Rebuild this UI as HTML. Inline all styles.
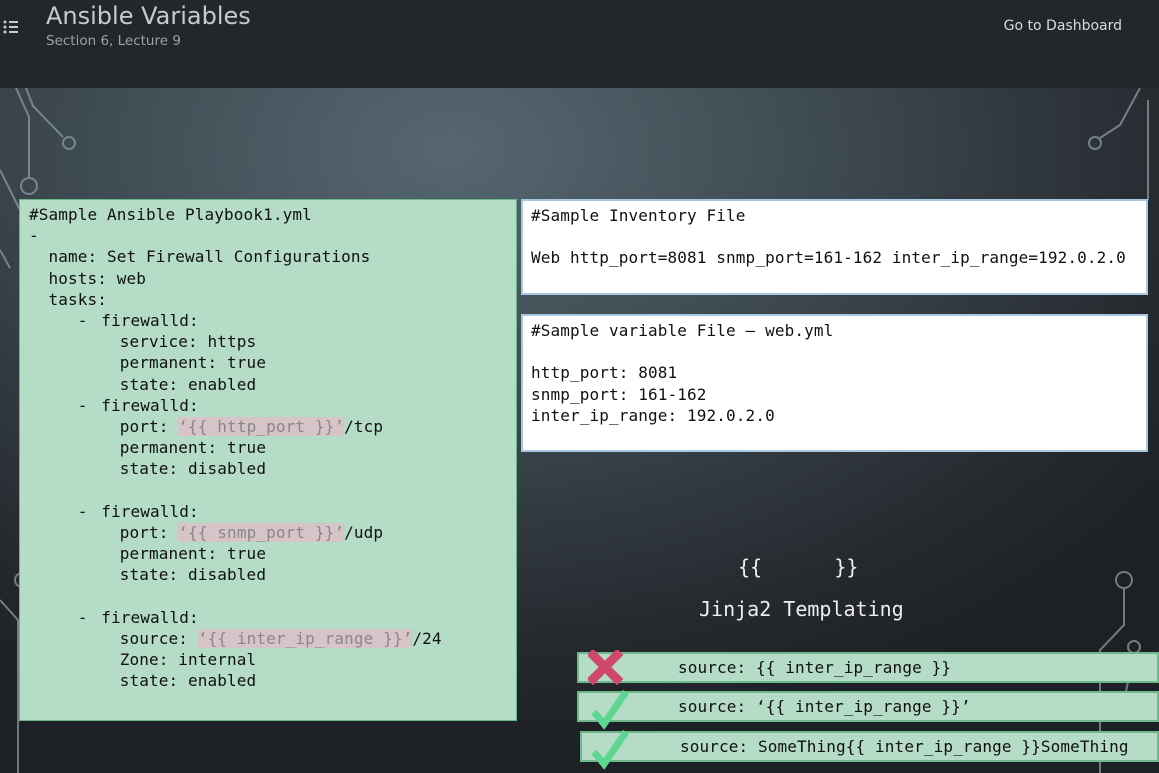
<!DOCTYPE html>
<html><head><meta charset="utf-8"><style>
body{margin:0;width:1159px;height:773px;overflow:hidden;font-family:"Liberation Sans",sans-serif;position:relative;
background:radial-gradient(ellipse 900px 600px at 450px 150px,#566770 0%,#3f4b53 40%,#262b30 80%,#1d2125 100%);}
.hdr{position:absolute;left:0;top:0;width:1159px;height:88px;background:#23262b;}
.t1{position:absolute;left:46px;top:2px;font-size:24px;color:#c8cbce;font-family:"DejaVu Sans",sans-serif;}
.t2{position:absolute;left:46px;top:33px;font-size:13.5px;color:#9ea2a6;font-family:"DejaVu Sans",sans-serif;}
.gd{position:absolute;right:37px;top:18px;font-size:14px;color:#d8dadc;font-family:"DejaVu Sans",sans-serif;}
pre{margin:0;font-family:"DejaVu Sans Mono","Liberation Mono",monospace;font-size:16px;letter-spacing:0.12px;line-height:21.2px;color:#111;}
.box{position:absolute;box-sizing:border-box;}
.l{left:19px;top:199px;width:498px;height:522px;background:#b4dcc6;border:1.5px solid #6bb689;padding:4px 0 0 9px;}
.w{background:#fff;border:2px solid #a9c7df;padding:4px 0 0 8px;}
.h{background:#d7c4c8;color:#888;}
.g{margin-left:4px}.k{margin-left:3px}
.s{position:absolute;box-sizing:border-box;background:#b4dcc6;border:2px solid #6fb88c;height:31px;}
.s pre{position:absolute;left:99px;top:3px;}
.c{position:absolute;color:#eee;font-family:"DejaVu Sans Mono",monospace;font-size:20px;}
</style></head><body>
<svg style="position:absolute;left:0;top:0" width="1159" height="773" fill="none" stroke="#8d9aa2" stroke-width="2" opacity=".75">
<path d="M16 88 L29 117 L29 178"/><circle cx="29" cy="186" r="8"/>
<path d="M26 88 L33 106 L63 137"/><circle cx="69" cy="143" r="6"/>
<path d="M0 170 L20 210"/><path d="M0 250 L10 268"/>
<path d="M1140 88 L1120 125 L1100 138"/><circle cx="1095" cy="143" r="6"/>
<path d="M1148 100 L1148 200"/>
<path d="M1124 588 L1124 625 L1100 650 L1100 773"/><circle cx="1124" cy="580" r="8"/>
<circle cx="1134" cy="647" r="6"/><path d="M1134 653 L1120 720"/>
<path d="M0 600 L18 620 L18 773"/><circle cx="22" cy="580" r="7"/>
<path d="M20 690 L45 700"/><circle cx="42" cy="686" r="6"/>
</svg>
<div class="hdr">
<svg style="position:absolute;left:3px;top:20px" width="16" height="14"><g fill="#c8cbce"><circle cx="2" cy="2" r="1.5"/><circle cx="2" cy="7" r="1.5"/><circle cx="2" cy="12" r="1.5"/><rect x="6" y="1" width="9" height="2"/><rect x="6" y="6" width="9" height="2"/><rect x="6" y="11" width="9" height="2"/></g></svg>
<div class="t1">Ansible Variables</div><div class="t2">Section 6, Lecture 9</div>
<div class="gd">Go to Dashboard</div></div>

<div class="box l"><pre>#Sample Ansible Playbook1.yml
-
  name: Set Firewall Configurations
  hosts: web
  tasks:
     -<span class="g"></span> firewalld:
<span class="k"></span>         service: https
<span class="k"></span>         permanent: true
<span class="k"></span>         state: enabled
     -<span class="g"></span> firewalld:
<span class="k"></span>         port: <span class="h">‘{{ http_port }}’</span>/tcp
<span class="k"></span>         permanent: true
<span class="k"></span>         state: disabled

     -<span class="g"></span> firewalld:
<span class="k"></span>         port: <span class="h">‘{{ snmp_port }}’</span>/udp
<span class="k"></span>         permanent: true
<span class="k"></span>         state: disabled

     -<span class="g"></span> firewalld:
<span class="k"></span>         source: <span class="h">‘{{ inter_ip_range }}’</span>/24
<span class="k"></span>         Zone: internal
<span class="k"></span>         state: enabled</pre></div>

<div class="box w" style="left:521px;top:199px;width:627px;height:96px"><pre>#Sample Inventory File

Web http_port=8081 snmp_port=161-162 inter_ip_range=192.0.2.0</pre></div>
<div class="box w" style="left:521px;top:314px;width:627px;height:138px"><pre>#Sample variable File – web.yml

http_port: 8081
snmp_port: 161-162
inter_ip_range: 192.0.2.0</pre></div>

<div class="c" style="left:738px;top:555px">{{&nbsp;&nbsp;&nbsp;&nbsp;&nbsp;&nbsp;}}</div>
<div class="c" style="left:699px;top:597px">Jinja2 Templating</div>

<div class="s" style="left:577px;top:652px;width:582px"><pre>source: {{ inter_ip_range }}</pre></div>
<div class="s" style="left:577px;top:691px;width:582px"><pre>source: ‘{{ inter_ip_range }}’</pre></div>
<div class="s" style="left:580px;top:731px;width:579px"><pre style="left:98px">source: SomeThing{{ inter_ip_range }}SomeThing</pre></div>

<svg style="position:absolute;left:588px;top:650px" width="50" height="123">
<path d="M5 5 L29 29 M29 5 L5 29" stroke="#d0476d" stroke-width="9" stroke-linecap="square"/>
<path d="M6 62 L16 74 L38 42" stroke="#5fd68f" stroke-width="7" fill="none"/>
<path d="M6 102 L16 114 L38 82" stroke="#5fd68f" stroke-width="7" fill="none"/>
</svg>
</body></html>
